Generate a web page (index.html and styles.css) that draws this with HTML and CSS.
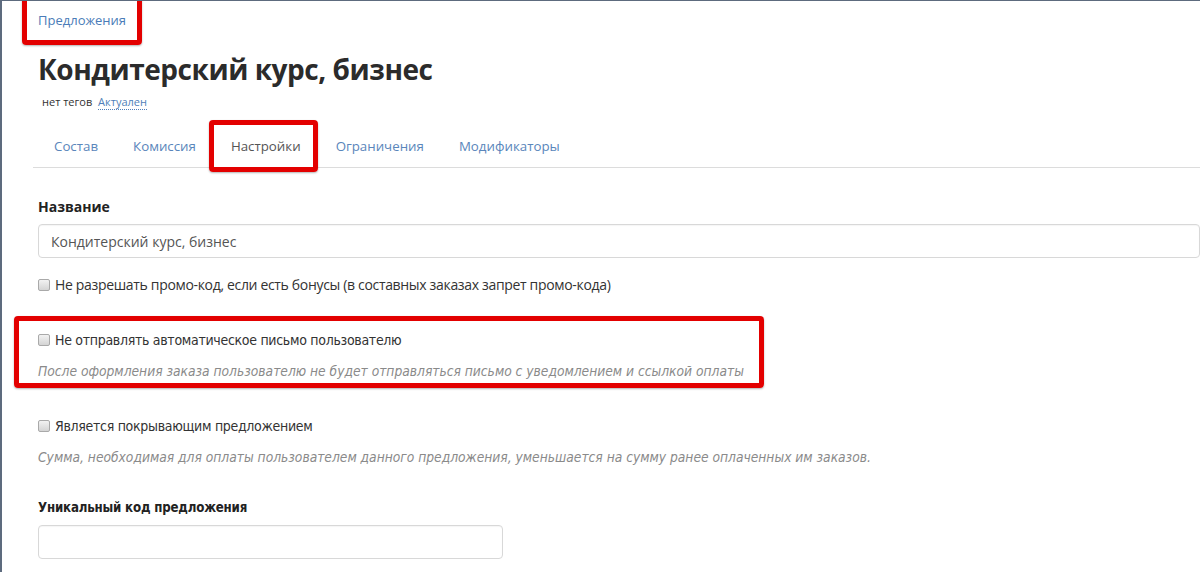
FILE: index.html
```html
<!DOCTYPE html>
<html>
<head>
	<meta charset="utf-8">
	<title>Предложения</title>
	<link rel="stylesheet" href="styles.css">
</head>
<body>
<div class="page">
	<div class="crumbs"><a href="#">Предложения</a></div>
	<h1 class="title">Кондитерский курс, бизнес</h1>
	<div class="tags">нет тегов <a href="#" class="status">Актуален</a></div>

	<ul class="tabs">
		<li><a href="#">Состав</a></li>
		<li><a href="#">Комиссия</a></li>
		<li class="active"><a href="#">Настройки</a></li>
		<li><a href="#">Ограничения</a></li>
		<li><a href="#">Модификаторы</a></li>
	</ul>

	<div class="form">
		<div class="field">
			<label class="label">Название</label>
			<input class="input" type="text" value="Кондитерский курс, бизнес">
		</div>

		<label class="check"><input type="checkbox"> Не разрешать промо-код, если есть бонусы (в составных заказах запрет промо-кода)</label>

		<div class="group">
			<label class="check narrow"><input type="checkbox"> Не отправлять автоматическое письмо пользователю</label>
			<p class="hint">После оформления заказа пользователю не будет отправляться письмо с уведомлением и ссылкой оплаты</p>
		</div>

		<div class="group">
			<label class="check narrow"><input type="checkbox"> Является покрывающим предложением</label>
			<p class="hint">Сумма, необходимая для оплаты пользователем данного предложения, уменьшается на сумму ранее оплаченных им заказов.</p>
		</div>

		<div class="field code">
			<label class="label narrow">Уникальный код предложения</label>
			<input class="input short" type="text">
		</div>
	</div>

	<!-- red marks drawn over the screenshot -->
	<div class="mark mark-crumbs"></div>
	<div class="mark mark-tab"></div>
	<div class="mark mark-mail"></div>
</div>
</body>
</html>
```

FILE: styles.css
```css
* {
  box-sizing: border-box;
}

body {
  margin: 0;
  font-family: "Open Sans", "Liberation Sans", sans-serif;
  font-size: 14px;
  color: #333;
  background: #fff;
}

a {
  color: #4f7fb9;
  text-decoration: none;
}

.page {
  position: relative;
  height: 572px;
  overflow: hidden;
  border-left: 2px solid #5d6b7e;
  border-top: 1px solid #5d6b7e;
}

.crumbs {
  padding: 10px 0 0 36px;
  font-size: 13px;
  line-height: 18px;
}

.crumbs a {
  color: #4a7cb8;
}

.title {
  margin: 23px 0 0 36px;
  font-size: 28px;
  line-height: 34px;
  font-weight: 700;
  color: #2b2b2b;
  letter-spacing: -0.45px;
}

.tags {
  margin: 8px 0 0 40px;
  font-size: 11px;
  line-height: 16px;
  color: #333;
}

.tags .status {
  margin-left: 3px;
  border-bottom: 1px dotted #4f7fb9;
}

.tabs {
  list-style: none;
  display: flex;
  margin: 15px 0 0 31px;
  padding: 0 0 0 4px;
  border-bottom: 1px solid #dcdcdc;
}

.tabs li a {
  display: block;
  padding: 0 17px 0 18px;
  line-height: 42px;
  font-size: 13.3px;
  color: #5a86bb;
}

.tabs li:first-child a {
  padding-left: 17px;
}

.tabs li.active a {
  color: #555;
}

.form {
  padding: 0 0 0 36px;
}

.field {
  margin-top: 29px;
}

.label {
  display: block;
  font-weight: 700;
  font-size: 14px;
  line-height: 20px;
  color: #222;
}

.input {
  display: block;
  width: 100%;
  height: 34px;
  margin-top: 7px;
  padding: 0 12px;
  border: 1px solid #d8d8d8;
  border-radius: 4px;
  font-family: inherit;
  font-size: 14px;
  color: #555;
  box-shadow: inset 0 1px 1px rgba(0,0,0,0.04);
}

.input.short {
  width: 465px;
}

.check {
  display: flex;
  align-items: center;
  margin-top: 17px;
  line-height: 20px;
  color: #333;
  letter-spacing: -0.33px;
}

.check input {
  -webkit-appearance: none;
  appearance: none;
  width: 12px;
  height: 12px;
  margin: 0 5px 0 0;
  border: 1px solid #a9a9a9;
  border-radius: 2px;
  background: linear-gradient(#f2f2f2, #d4d4d4);
}

.narrow {
  font-family: "DejaVu Sans", sans-serif;
  font-stretch: condensed;
  letter-spacing: -0.3px;
}

.group {
  margin-top: 35px;
}

.group .check {
  margin-top: 0;
}

.hint {
  margin: 11px 0 0 0;
  font-style: italic;
  font-size: 13.7px;
  line-height: 20px;
  color: #8a8a8a;
  font-family: "DejaVu Sans", sans-serif;
  font-stretch: condensed;
}

.code {
  margin-top: 31px;
}

.code .label {
  font-size: 13.2px;
  letter-spacing: -0.2px;
}

.mark {
  position: absolute;
  border: 5px solid #e30000;
  border-radius: 4px;
  box-shadow: 0 1px 2px rgba(0,0,0,0.3);
}

.mark-crumbs {
  left: 20px;
  top: -6px;
  width: 120px;
  height: 50px;
}

.mark-tab {
  left: 207px;
  top: 119px;
  width: 109px;
  height: 52px;
}

.mark-mail {
  left: 12px;
  top: 315px;
  width: 750px;
  height: 72px;
}
```
